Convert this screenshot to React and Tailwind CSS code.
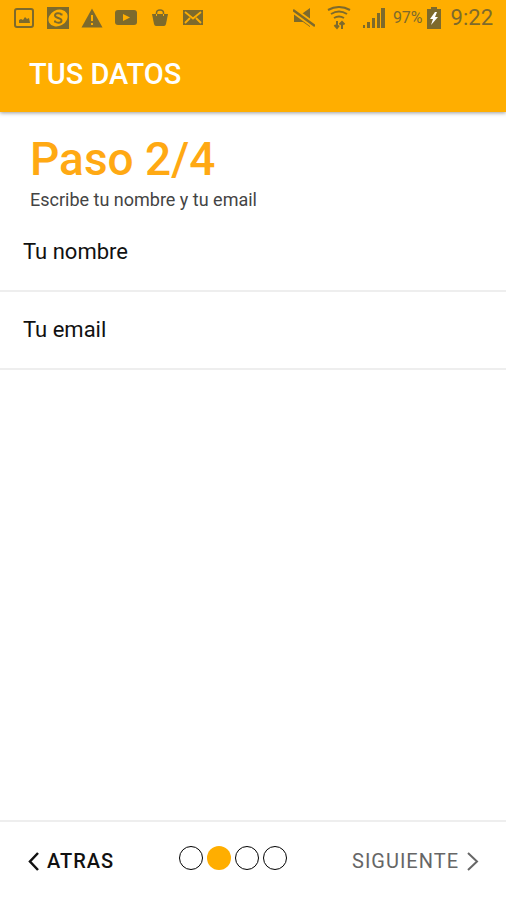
import React from "react";

function StatusBar() {
  return (
    <div className="flex h-9 items-center justify-between px-[13px] text-[#7d6a2c]">
      <div className="flex items-center gap-3">
        <svg className="h-[22px] w-[22px]" viewBox="0 0 22 22" fill="none" aria-hidden="true">
          <rect x="2" y="2" width="18" height="18" rx="2" stroke="currentColor" strokeWidth="2" />
          <path d="M6 16v-3l2-1 2 1 2-3 2 2 2-1 1 5z" fill="currentColor" />
        </svg>
        <svg className="h-[22px] w-[22px]" viewBox="0 0 22 22" aria-hidden="true">
          <rect x="0" y="0" width="22" height="22" fill="currentColor" />
          <ellipse cx="11" cy="11" rx="10" ry="8" transform="rotate(-28 11 11)" fill="#ffae00" />
          <path d="M14.500 8.500V6.500M14.500 8C13.500 5.500 8 5.500 8 8.500c0 3 6.500 2 6.500 5 0 3-5.500 3-6.500.5M8 13.500v2" fill="none" stroke="currentColor" strokeWidth="2" />
        </svg>
        <svg className="h-[22px] w-[22px]" viewBox="0 0 22 22" aria-hidden="true">
          <path d="M11 1.500L21.500 20.500H.5z" fill="currentColor" />
          <path d="M11 8v6M11 16v2" stroke="#ffae00" strokeWidth="2" />
        </svg>
        <svg className="h-[22px] w-[22px]" viewBox="0 0 22 22" aria-hidden="true">
          <rect x="0" y="3" width="22" height="15" rx="3" fill="currentColor" />
          <path d="M8 7l7 3.500L8 14z" fill="#ffae00" />
        </svg>
        <svg className="h-[22px] w-[22px]" viewBox="0 0 22 22" aria-hidden="true">
          <path d="M3 7h16l-2 10q-.5 2-2 2H7q-1.500 0-2-2z" fill="currentColor" />
          <path d="M7.500 9V6q0-3 3.500-3t3.500 3v3" fill="none" stroke="currentColor" strokeWidth="1.500" />
          <path d="M7.500 7v2M14.500 7v2" stroke="#ffae00" strokeWidth="1" />
        </svg>
        <svg className="h-[22px] w-[22px]" viewBox="0 0 22 22" aria-hidden="true">
          <rect x="0" y="3" width="20" height="15" fill="currentColor" />
          <path d="M2 5l8 6.500L18 5M2 16l5-5M18 16l-5-5" fill="none" stroke="#ffae00" strokeWidth="1.800" />
        </svg>
      </div>
      <div className="flex items-center">
        <svg className="mr-3 h-[22px] w-[22px]" viewBox="0 0 22 22" aria-hidden="true">
          <path d="M1 7h6l3-1 7-5v19l-7-5H1z" fill="currentColor" />
          <path d="M0 3l22 16" stroke="#ffae00" strokeWidth="6" />
          <path d="M0 3l22 16" stroke="currentColor" strokeWidth="2.500" />
        </svg>
        <svg className="mr-3 h-6 w-6" viewBox="0 0 24 24" fill="none" stroke="currentColor" strokeWidth="2" aria-hidden="true">
          <path d="M1 4q11-6 22 0M4 8q8-5 16 0M7 12q5-3 10 0" />
          <path d="M10 15v7M7.500 19L10 22l2-2.500M15 23v-7M12.500 18.500L15 16l2.500 2.500" />
        </svg>
        <svg className="mr-2 h-[22px] w-[22px]" viewBox="0 0 22 22" fill="currentColor" aria-hidden="true">
          <path d="M0 18h2v3H0zM4 15h3v6H4zM9 11h3v10H9zM14 6h3v15h-3zM18 1h4v20h-4z" />
        </svg>
        <span className="mr-1 text-base">97%</span>
        <svg className="mr-[10px] h-[22px] w-[14px]" viewBox="0 0 14 22" aria-hidden="true">
          <path d="M4 0h6v2h4v20H0V2h4z" fill="currentColor" />
          <path d="M8 5l-5 7h3l-2 6 7-8H8l2-5z" fill="#fff" />
        </svg>
        <span className="text-[22px] leading-9">9:22</span>
      </div>
    </div>
  );
}

function Field({ id, label, type }) {
  return (
    <div className="flex h-[78px] items-center border-b-2 border-[#eeeeee] px-[23px]">
      <label htmlFor={id} className="shrink-0 text-[22px] leading-8">{label}</label>
      <input id={id} type={type} className="h-12 min-w-0 flex-1 bg-transparent pl-4 text-[22px] outline-none" />
    </div>
  );
}

const steps = [1, 2, 3, 4];

export default function App() {
  return (
    <div className="flex min-h-screen flex-col bg-white font-['Roboto',sans-serif] text-[#111111]">
      <header className="bg-[#ffae00] shadow-[0_1px_4px_rgba(0,0,0,0.4)]">
        <StatusBar />
        <div className="flex h-[76px] items-center px-[29px]">
          <h1 className="text-[29px] leading-8 font-medium text-white">TUS DATOS</h1>
        </div>
      </header>
      <main className="flex-1">
        <div className="px-[30px] pt-5">
          <h2 className="text-[46px] leading-[54px] font-medium text-[#ffa913]">Paso 2/4</h2>
          <p className="text-lg leading-7 text-[#444444]">Escribe tu nombre y tu email</p>
        </div>
        <form>
          <Field id="nombre" label="Tu nombre" type="text" />
          <Field id="email" label="Tu email" type="email" />
        </form>
      </main>
      <footer className="flex h-20 items-center justify-between border-t-2 border-[#eeeeee] px-[27px]">
        <button type="button" className="flex items-center gap-2 text-xl font-medium tracking-wider">
          <svg className="h-5 w-3" viewBox="0 0 12 20" fill="none" stroke="currentColor" strokeWidth="2.500" aria-hidden="true">
            <path d="M11 2L3 10.500L11 19" />
          </svg>
          ATRAS
        </button>
        <div className="flex gap-1 pb-1.5">
          {steps.map((step) => (
            <span
              key={step}
              className={
                step === 2
                  ? "size-6 rounded-full bg-[#ffae00]"
                  : "size-6 rounded-full border border-black"
              }
            />
          ))}
        </div>
        <button type="button" className="flex items-center gap-2 text-xl tracking-wider text-[#666666]">
          SIGUIENTE
          <svg className="h-5 w-3" viewBox="0 0 12 20" fill="none" stroke="currentColor" strokeWidth="2" aria-hidden="true">
            <path d="M1 2L10 10.500L1 19" />
          </svg>
        </button>
      </footer>
    </div>
  );
}
